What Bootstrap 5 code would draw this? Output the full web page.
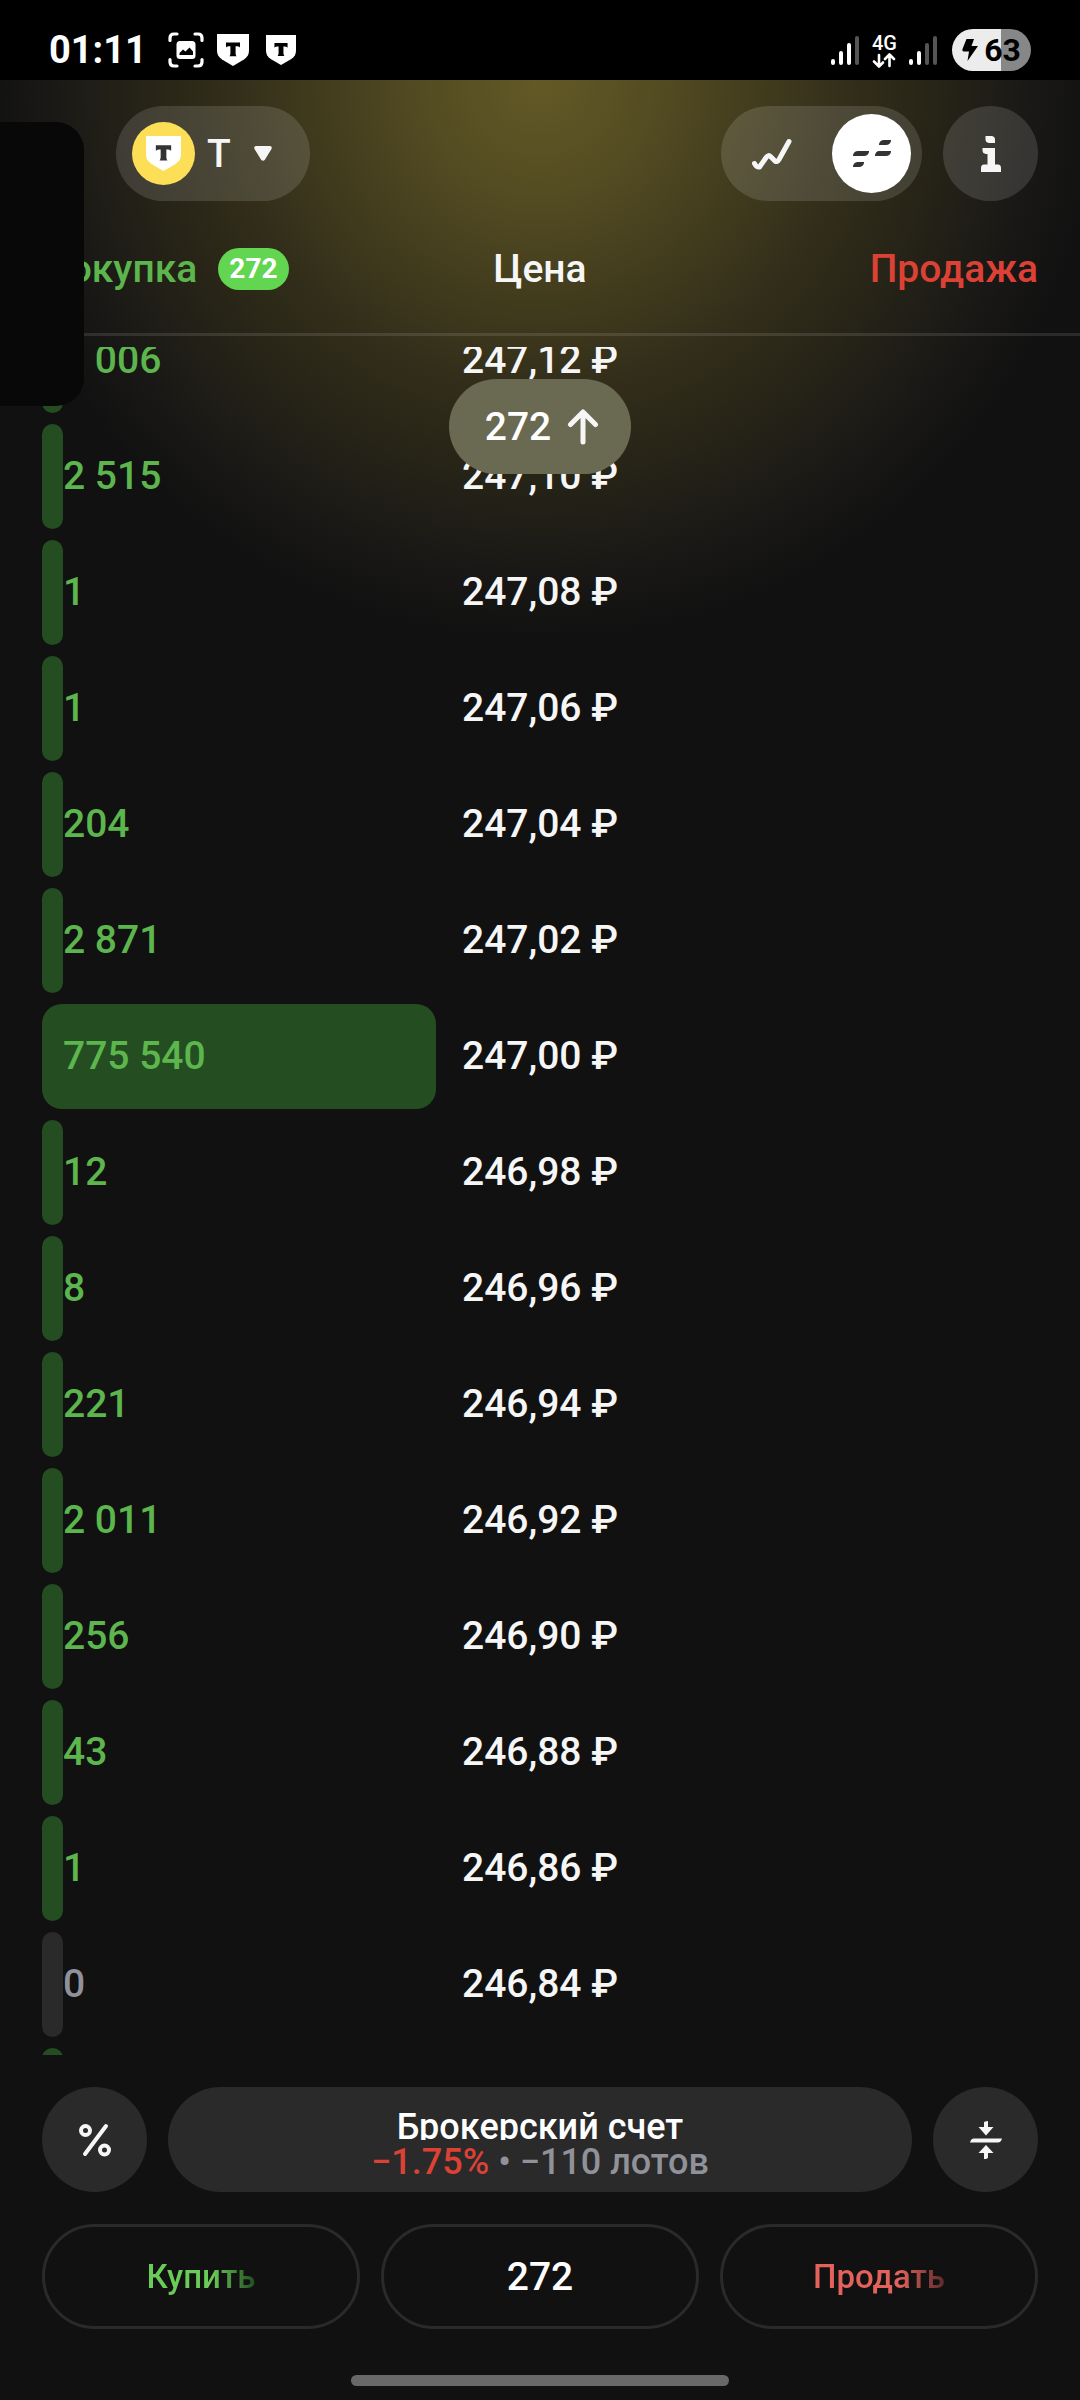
<!DOCTYPE html>
<html lang="ru" data-bs-theme="dark">
<head>
<meta charset="utf-8">
<meta name="viewport" content="width=device-width, initial-scale=1">
<title>Стакан заявок</title>
<link href="https://cdn.jsdelivr.net/npm/bootstrap@5.3.0/dist/css/bootstrap.min.css" rel="stylesheet">
<style>
  body { font-family: Roboto, "Noto Sans", sans-serif; font-weight: 500; font-size: 39px; line-height: 48px; color: #f6f6f6; background: #111; }
  button, input { font: inherit; color: inherit; border: 0; background: none; padding: 0; }
  svg { display: block; flex: none; }
  .status { height: 80px; background: #000; padding: 20px 49px 0; }
  .clock { font-size: 38px; color: #fff; margin-right: 20px; }
  .notices { gap: 13px; }
  .net { font-size: 20px; line-height: 20px; color: #fff; padding: 0 12px; }
  .battery { width: 79px; height: 42px; border-radius: 21px; color: #000; font-size: 32px; line-height: 42px; gap: 6px; margin-left: 14px; background: linear-gradient(90deg, #ececec 62%, #878787 62%); }
  .screen { min-height: 0; background: radial-gradient(circle 560px at 50% 0, #635926 0%, #544c22 20%, #433d1e 38%, #332e1a 55%, #242217 74%, #191816 88%, #111 100%); }
  .side { padding-left: 42px; padding-right: 42px; }
  .topbar { padding-top: 26px; }
  .chip { height: 95px; border-radius: 48px; background: rgba(255, 255, 255, .13); }
  .ticker { margin-left: 74px; padding: 0 38px 0 16px; gap: 12px; }
  .caret { margin-left: 11px; }
  .coin { width: 63px; height: 63px; background: #fddf57; --t: #333; }
  .seg { padding: 0 11px; gap: 21px; }
  .seg button { width: 79px; height: 79px; border-radius: 50%; }
  .seg .on { background: #fff; }
  .info { width: 95px; margin-left: 21px; }
  .book { min-height: 0; position: relative; }
  .book tr { display: grid; grid-template-columns: 1fr 208px 1fr; margin: 0; }
  .book thead { display: block; border-bottom: 3px solid rgba(255, 255, 255, .11); padding-top: 44px; padding-bottom: 40px; }
  .book th, .book td { font-weight: 500; padding: 0; }
  .buy { color: #5cb64d; }
  .sell { color: #dc4136; }
  .count { font-size: 28px; font-weight: 700; line-height: 42px; border-radius: 21px; padding: 0 11px; background: #62d551; color: #fff; margin-left: 21px; }
  .book tbody { display: block; overflow: hidden; flex: 1 1 0; min-height: 0; margin-top: 11px; }
  .book tbody tr { height: 105px; margin-bottom: 11px; line-height: 105px; }
  .book tbody tr:first-child { margin-top: -39px; }
  .vol { display: block; min-width: 21px; height: 105px; padding-left: 21px; border-radius: 20px; background: #244e22; white-space: nowrap; color: #5cb64d; }
  .vol.none { background: #2a2a2a; color: #919299; }
  .jump { position: absolute; top: 178px; left: 50%; margin-left: -91px; width: 182px; height: 95px; border-radius: 48px; background: #6a6952; gap: 16px; padding-left: 4px; }
  .drawer { position: absolute; left: 0; top: 122px; width: 84px; height: 284px; border-radius: 0 28px 28px 0; background: #080808; }
  .dock { padding-top: 32px; padding-bottom: 14px; }
  .dock > div { gap: 21px; }
  .round { width: 105px; height: 105px; border-radius: 50%; background: #2a2a2a; }
  .account { height: 105px; border-radius: 53px; background: #2a2a2a; font-size: 36px; line-height: 36px; padding-top: 23px; gap: 4px; }
  .account .name { height: 30px; line-height: 34px; overflow: hidden; color: #fff; }
  .account .muted { color: #919299; }
  .outline { height: 105px; border-radius: 53px; border: 3px solid #2a2a2a; flex: 1 1 0; min-width: 0; }
  .trade { margin-top: 32px; }
  .trade button { font-size: 33px; }
  .fade-buy, .fade-sell { -webkit-background-clip: text; background-clip: text; color: transparent; }
  .fade-buy { background-image: linear-gradient(90deg, #69cc58 60%, #234a20 100%); }
  .fade-sell { background-image: linear-gradient(90deg, #e4625c 65%, #582c2a 100%); }
  .home { width: 378px; height: 11px; border-radius: 6px; background: #686868; margin-top: 46px; }
</style>
<script src="https://cdn.jsdelivr.net/npm/bootstrap@5.3.0/dist/js/bootstrap.bundle.min.js"></script>
</head>
<body>
<svg width="0" height="0" class="position-absolute" aria-hidden="true">
  <symbol id="shield" viewBox="0 0 32 32"><path fill="#fff" d="M0 0H32V16.500C32 20.500 30.500 23 27 25.500L16 32 5 25.500C1.500 23 0 20.500 0 16.500Z"/><path fill="var(--t,#000)" d="M9 8.500H23V13.500C22 12.500 21 12.300 18.600 12.300V19C18.600 20.800 19 21.500 19.600 22.300H12.400C13 21.500 13.400 20.800 13.400 19V12.300C11 12.300 10 12.500 9 13.500Z"/></symbol>
</svg>
<div class="vh-100 d-flex flex-column position-relative overflow-hidden">
  <header class="status d-flex align-items-center justify-content-between">
    <div class="notices d-flex align-items-center">
      <span class="clock fw-bold me-2">01:11</span>
      <svg width="36" height="36" viewBox="0 0 36 36" fill="none" stroke="#fff" stroke-width="3.200" stroke-linecap="round"><path d="M2 8.500V6Q2 2 6 2H9M27 2H30Q34 2 34 6V8.500M34 27.500V30Q34 34 30 34H27M9 34H6Q2 34 2 30V27.500"/><rect x="8.500" y="9" width="19" height="18" rx="3.500" fill="#fff" stroke="none"/><path d="M11.500 23V21L15 17.500 17.500 19.500 21.500 15.500 25 19.500V23Z" fill="#000" stroke="none"/></svg>
      <svg width="32" height="32"><use href="#shield"/></svg>
      <svg class="ms-1" width="30" height="30"><use href="#shield"/></svg>
    </div>
    <div class="d-flex align-items-center">
      <svg width="29" height="31" viewBox="0 0 29 31" stroke="#fff" stroke-width="4" stroke-linecap="round"><path d="M2 28V26M10 28V18M18 28V10"/><path d="M26 28V3" stroke="#555"/></svg>
      <div class="net text-center">4G
        <svg width="24" height="15" viewBox="0 0 24 15" fill="none" stroke="#fff" stroke-width="2.600" stroke-linecap="round" stroke-linejoin="round"><path d="M7 2V13M2 8.500 7 13.500 11 9.500M17.500 13V2M13 6 17.500 1.500 22 6"/></svg>
      </div>
      <svg width="29" height="31" viewBox="0 0 29 31" stroke="#fff" stroke-width="4" stroke-linecap="round"><path d="M2 28V26M10 28V18"/><path d="M18 28V10M26 28V3" stroke="#555"/></svg>
      <div class="battery d-flex align-items-center justify-content-center fw-bold">
        <svg width="16" height="22" viewBox="0 0 16 22"><path d="M4.500 0H12L9.500 7H16L5.500 22 7 12.500H2C.5 12.500 0 11.500.5 10Z"/></svg>63
      </div>
    </div>
  </header>

  <main class="screen d-flex flex-column flex-grow-1">
    <nav class="topbar side d-flex">
      <button class="chip ticker d-flex align-items-center" aria-label="Инструмент T">
        <span class="coin rounded-circle d-flex align-items-center justify-content-center"><svg width="35" height="35"><use href="#shield"/></svg></span>
        <span>T</span>
        <svg class="caret" width="18" height="15" viewBox="0 0 18 15"><path fill="#f6f6f6" d="M2 0H16Q18.500.5 17.500 3L11 13.500Q9 16 7 13.500L.5 3Q-.5.5 2 0Z"/></svg>
      </button>
      <div class="chip seg d-flex align-items-center ms-auto">
        <button class="d-flex align-items-center justify-content-center" aria-label="График"><svg width="40" height="34" viewBox="0 0 40 34" fill="none" stroke="#f6f6f6" stroke-width="5" stroke-linecap="round" stroke-linejoin="round"><path d="M2.500 26.500Q4.500 30.500 7.500 30L14.500 20Q16.500 17.500 18.500 19.500L23 24Q25.500 25.500 27 22.500L37 4.500"/></svg></button>
        <button class="on d-flex align-items-center justify-content-center" aria-label="Стакан"><svg width="38" height="28" viewBox="0 0 38 28" fill="#333"><path d="M31 0H38V1Q37 5 33 5H26V4Q27 0 31 0ZM5 11H16V12Q15 16 11 16H0V15Q1 11 5 11ZM26 11H38V12Q37 16 33 16H22V15Q23 11 26 11ZM5 22H11V23Q10 27 6 27H0V26Q1 22 5 22Z"/></svg></button>
      </div>
      <button class="chip info d-flex align-items-center justify-content-center" aria-label="Информация"><svg width="20" height="36" viewBox="0 0 20 36" fill="#f6f6f6"><path d="M4.500 0H11Q14 .5 14 3.500V7H8Q4.500 6.500 4.500 3.500ZM1.500 12H14V28.500H17Q20 28.500 20 32V36H0V32Q0 28.500 3 28.500H6.500V18H5Q1.500 17.500 1.500 14.500Z"/></svg></button>
    </nav>

    <table class="book d-flex flex-column flex-grow-1">
      <thead class="side"><tr>
        <th scope="col" class="buy d-flex align-items-center">Покупка<span class="count">272</span></th>
        <th scope="col" class="text-center">Цена</th>
        <th scope="col" class="sell text-end">Продажа</th>
      </tr></thead>
      <tbody class="side">
        <tr><td><span class="vol" style="width:1%">2 006</span></td><td class="text-center">247,12 ₽</td><td></td></tr>
        <tr><td><span class="vol" style="width:1%">2 515</span></td><td class="text-center">247,10 ₽</td><td></td></tr>
        <tr><td><span class="vol" style="width:0%">1</span></td><td class="text-center">247,08 ₽</td><td></td></tr>
        <tr><td><span class="vol" style="width:0%">1</span></td><td class="text-center">247,06 ₽</td><td></td></tr>
        <tr><td><span class="vol" style="width:0%">204</span></td><td class="text-center">247,04 ₽</td><td></td></tr>
        <tr><td><span class="vol" style="width:1%">2 871</span></td><td class="text-center">247,02 ₽</td><td></td></tr>
        <tr><td><span class="vol" style="width:100%">775 540</span></td><td class="text-center">247,00 ₽</td><td></td></tr>
        <tr><td><span class="vol" style="width:0%">12</span></td><td class="text-center">246,98 ₽</td><td></td></tr>
        <tr><td><span class="vol" style="width:0%">8</span></td><td class="text-center">246,96 ₽</td><td></td></tr>
        <tr><td><span class="vol" style="width:0%">221</span></td><td class="text-center">246,94 ₽</td><td></td></tr>
        <tr><td><span class="vol" style="width:1%">2 011</span></td><td class="text-center">246,92 ₽</td><td></td></tr>
        <tr><td><span class="vol" style="width:0%">256</span></td><td class="text-center">246,90 ₽</td><td></td></tr>
        <tr><td><span class="vol" style="width:0%">43</span></td><td class="text-center">246,88 ₽</td><td></td></tr>
        <tr><td><span class="vol" style="width:0%">1</span></td><td class="text-center">246,86 ₽</td><td></td></tr>
        <tr><td><span class="vol none" style="width:0%">0</span></td><td class="text-center">246,84 ₽</td><td></td></tr>
        <tr><td><span class="vol" style="width:0%"></span></td><td></td><td></td></tr>
      </tbody>
      <caption class="p-0 m-0"><button class="jump d-flex align-items-center justify-content-center text-white">272
        <svg width="32" height="36" viewBox="0 0 32 36" fill="none" stroke="#f6f6f6" stroke-width="5" stroke-linecap="round" stroke-linejoin="round"><path d="M16 33V4M3.500 15.500 16 3 28.500 15.500"/></svg></button></caption>
    </table>

    <footer class="dock side">
      <div class="d-flex">
        <button class="round d-flex align-items-center justify-content-center" aria-label="Проценты"><svg width="32" height="34" viewBox="0 0 32 34" fill="none" stroke="#f6f6f6" stroke-width="4" stroke-linecap="round"><circle cx="6.500" cy="7.500" r="4.500"/><circle cx="25.500" cy="27" r="4.500"/><path d="M27 3 6 31"/></svg></button>
        <button class="account flex-grow-1 d-flex flex-column align-items-center">
          <span class="name">Брокерский счет</span>
          <span><span class="sell">−1.75%</span><span class="muted"> • −110 лотов</span></span>
        </button>
        <button class="round d-flex align-items-center justify-content-center" aria-label="К центру"><svg width="32" height="38" viewBox="0 0 32 38" fill="#f6f6f6"><path d="M14 1.500Q14.500 0 18 0V6H23.500L16 14.500 8.500 6H14ZM4 17.500H32Q31 21.500 28 21.500H0Q1 17.500 4 17.500ZM16 24 23.500 32H18V36.500Q17.500 38 14 38V32H8.500Z"/></svg></button>
      </div>
      <div class="trade d-flex">
        <button class="outline"><span class="fade-buy">Купить</span></button>
        <input class="outline text-center text-white" type="text" inputmode="numeric" value="272" aria-label="Количество лотов">
        <button class="outline"><span class="fade-sell">Продать</span></button>
      </div>
      <div class="home mx-auto"></div>
    </footer>
  </main>
  <div class="drawer"></div>
</div>
</body>
</html>
